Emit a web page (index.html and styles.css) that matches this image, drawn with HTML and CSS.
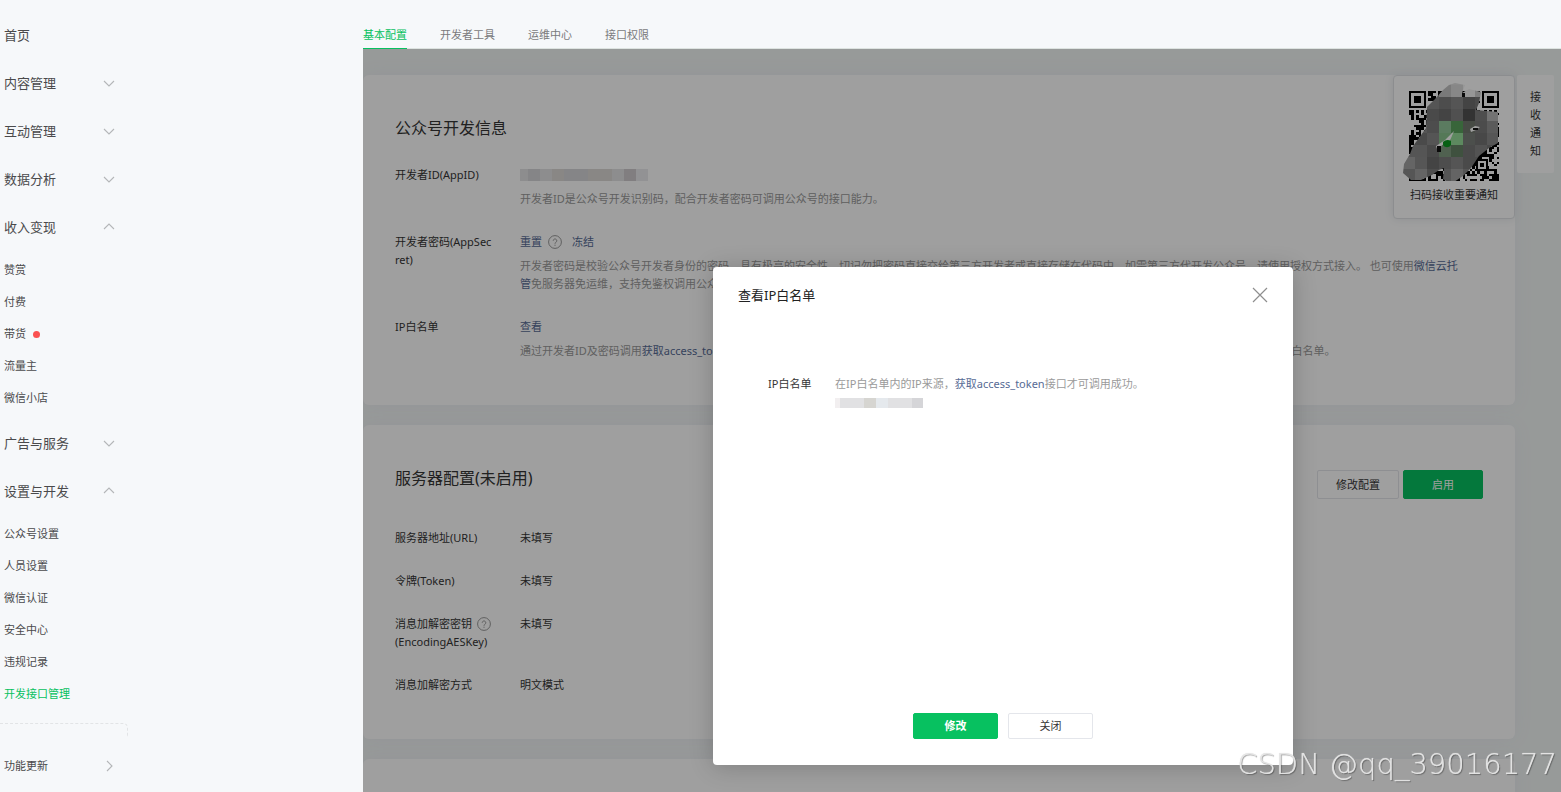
FILE: index.html
```html
<!DOCTYPE html>
<html lang="zh-CN">
<head>
<meta charset="utf-8">
<title>基本配置</title>
<link rel="stylesheet" href="styles.css">
</head>
<body>
<svg class="defs" aria-hidden="true">
  <symbol id="chevron" viewBox="0 0 12 8"><path d="M1 2 6 7 11 2" fill="none" stroke="currentColor" stroke-width="1.1"/></symbol>
  <symbol id="help" viewBox="0 0 14 14"><circle cx="7" cy="7" r="6.4" fill="none" stroke="currentColor"/><path d="M5.2 5.7a1.8 1.8 0 1 1 2.7 1.6c-.6.4-.9.7-.9 1.4M7 9.7v1.1" fill="none" stroke="currentColor"/></symbol>
</svg>
<div class="layout">
  <nav class="sidebar">
    <a class="menu" href="#">首页</a>
    <button class="menu">内容管理<svg class="chev"><use href="#chevron"/></svg></button>
    <button class="menu">互动管理<svg class="chev"><use href="#chevron"/></svg></button>
    <button class="menu">数据分析<svg class="chev"><use href="#chevron"/></svg></button>
    <button class="menu">收入变现<svg class="chev up"><use href="#chevron"/></svg></button>
    <div class="submenu">
      <a href="#">赞赏</a>
      <a href="#">付费</a>
      <a href="#">带货<span class="dot"></span></a>
      <a href="#">流量主</a>
      <a href="#">微信小店</a>
    </div>
    <button class="menu">广告与服务<svg class="chev"><use href="#chevron"/></svg></button>
    <button class="menu">设置与开发<svg class="chev up"><use href="#chevron"/></svg></button>
    <div class="submenu">
      <a href="#">公众号设置</a>
      <a href="#">人员设置</a>
      <a href="#">微信认证</a>
      <a href="#">安全中心</a>
      <a href="#">违规记录</a>
      <a class="current" href="#">开发接口管理</a>
    </div>
    <div class="divider"></div>
    <a class="menu updates" href="#">功能更新<svg class="chev right"><use href="#chevron"/></svg></a>
  </nav>

  <main class="main">
    <nav class="tabs">
      <a class="active" href="#">基本配置</a>
      <a href="#">开发者工具</a>
      <a href="#">运维中心</a>
      <a href="#">接口权限</a>
    </nav>
    <div class="stage">
      <section class="card">
        <header class="card-head"><h2>公众号开发信息</h2></header>
        <dl class="rows">
          <dt>开发者ID(AppID)</dt>
          <dd>
            <div class="line"><svg class="mask-id" viewBox="0 0 128 12" shape-rendering="crispEdges"><path fill="#e2e2e4" d="M0 0h128v12H0z"/><path fill="#d6d6d8" d="M8 0h12v12H8zM44 0h12v12H44zM56 0h12v12H56z"/><path fill="#dcd9d5" d="M32 0h12v12H32zM68 0h24v12H68z"/><path fill="#cfcace" d="M104 0h12v12h-12z"/><path fill="#eaeaee" d="M116 0h12v12h-12z"/></svg></div>
            <p>开发者ID是公众号开发识别码，配合开发者密码可调用公众号的接口能力。</p>
          </dd>
          <dt>开发者密码(AppSecret)</dt>
          <dd>
            <div class="line"><a href="#">重置</a><svg class="help"><use href="#help"/></svg><a class="freeze" href="#">冻结</a></div>
            <p>开发者密码是校验公众号开发者身份的密码，具有极高的安全性。切记勿把密码直接交给第三方开发者或直接存储在代码中。如需第三方代开发公众号，请使用授权方式接入。 也可使用<a href="#">微信云托管</a>免服务器免运维，支持免鉴权调用公众号服务端接口。</p>
          </dd>
          <dt>IP白名单</dt>
          <dd>
            <div class="line"><a href="#">查看</a></div>
            <p>通过开发者ID及密码调用<a href="#">获取access_token</a>接口时，需要设置访问来源IP为白名单。为保障账号安全，建议仅添加可信服务器的出口地址，并定期核对已有的IP白名单。</p>
          </dd>
        </dl>
      </section>

      <section class="card">
        <header class="card-head">
          <h2>服务器配置(未启用)</h2>
          <div class="actions"><button class="btn">修改配置</button><button class="btn primary">启用</button></div>
        </header>
        <dl class="rows">
          <dt>服务器地址(URL)</dt><dd>未填写</dd>
          <dt>令牌(Token)</dt><dd>未填写</dd>
          <dt><span class="line">消息加解密密钥<svg class="help"><use href="#help"/></svg></span>(EncodingAESKey)</dt><dd>未填写</dd>
          <dt>消息加解密方式</dt><dd>明文模式</dd>
        </dl>
      </section>

      <section class="card"></section>

      <aside class="notice">
        <div class="qr-card">
          <svg class="qr" viewBox="0 0 110 110">
            <defs><clipPath id="blob"><path d="M28 31 36 23 44 14 50 9 56 7 66 9 63 17 70 13 82 16 80 27 77 34 99 36V67L90 72 80 80 72 92 64 100 52 108 44 103 45 92 40 94 33 99 22 104 12 104 4 97 5 88 11 78 14 70 20 62 27 52z"/></clipPath></defs>
            <g id="modules" shape-rendering="crispEdges"></g>
            <g id="mosaic" clip-path="url(#blob)" shape-rendering="crispEdges"></g>
            <path fill="#fff" d="M55 55 50 67 43 69 39 76 37 70 46 64zM71 53 76 50 81 51 77 54 72 56z"/>
            <path fill="#111" d="M38 70h4v6h-4zM74 52h5v2h-5zM63 17h3v4h-3z"/>
            <path fill="#0c9a20" d="M44 66c2-2 5-3 8-1v4c-2 3-6 3-8 0z"/>
          </svg>
          <span>扫码接收重要通知</span>
        </div>
        <div class="notice-tab">接收通知</div>
      </aside>

      <div class="overlay"></div>

      <div class="modal" role="dialog" aria-labelledby="dlg-title">
        <header class="modal-head">
          <h3 id="dlg-title">查看IP白名单</h3>
          <button class="close" aria-label="关闭"><svg viewBox="0 0 16 16"><path d="M1 1 15 15M15 1 1 15" stroke="currentColor" stroke-width="1.2"/></svg></button>
        </header>
        <div class="modal-body">
          <div class="modal-label">IP白名单</div>
          <div>
            <p>在IP白名单内的IP来源，<a href="#">获取access_token</a>接口才可调用成功。</p>
            <svg class="mask-ip" viewBox="0 0 88 10" shape-rendering="crispEdges"><path fill="#e1e1e3" d="M0 0h88v10H0z"/><path fill="#f2eff0" d="M0 0h5v10H0z"/><path fill="#d6d5d1" d="M29 0h12v10H29z"/><path fill="#e5e9ed" d="M41 0h12v10H41z"/><path fill="#d5d5d8" d="M77 0h11v10H77z"/></svg>
          </div>
        </div>
        <footer class="modal-foot"><button class="btn primary strong">修改</button><button class="btn">关闭</button></footer>
      </div>
    </div>
  </main>
</div>
<div class="watermark">CSDN @qq_39016177</div>
<script src="script.js"></script>
</body>
</html>
```
FILE: styles.css
```css
* { box-sizing: border-box; }
body {
  margin: 0;
  background: #f6f8fa;
  color: #353535;
  font: 11px/18px "Noto Sans", "Noto Sans CJK SC", sans-serif;
}
h2, h3, p, dl, dd { margin: 0; font-weight: 400; }
a { color: #576b95; text-decoration: none; }
button { font: inherit; color: inherit; padding: 0; border: 0; background: none; cursor: pointer; }
.defs { position: absolute; width: 0; height: 0; }

.layout { display: flex; height: 100vh; overflow: hidden; }

.sidebar { flex: 0 0 363px; padding-top: 11px; color: #4a4a4c; }
.menu {
  display: flex;
  align-items: center;
  justify-content: space-between;
  width: 119px;
  height: 48px;
  padding: 0 4px;
  font-size: 13px;
  color: #4a4a4c;
}
.chev { width: 12px; height: 8px; color: #b4b6b8; }
.up { transform: rotate(180deg); }
.right { transform: rotate(-90deg); }
.submenu { padding: 3px 0 5px; }
.submenu a { display: flex; align-items: center; height: 32px; padding-left: 4px; color: #4a4a4c; }
.submenu .current { color: #07c160; }
.dot { width: 7px; height: 7px; margin-left: 7px; border-radius: 50%; background: #fa5151; }
.divider { width: 128px; height: 14px; margin-top: 8px; border: dashed #e2e4e6; border-width: 1px 1px 0 0; border-radius: 0 5px 0 0; }
.updates { margin-top: 5px; font-size: 11px; }

.main { flex: 1; min-width: 0; display: flex; flex-direction: column; }
.tabs { display: flex; gap: 33px; padding-top: 22px; border-bottom: 1px solid #dde3e0; }
.tabs a { line-height: 26px; margin-bottom: -1px; border-bottom: 1px solid transparent; color: #7a7a7c; }
.tabs .active { color: #07c160; border-color: #07c160; }

.stage { position: relative; flex: 1; overflow: hidden; padding: 26px 46px 0 0; background: #f3f7f5; }
.card { min-height: 300px; margin-bottom: 20px; padding: 41px 32px 45px; border-radius: 6px; background: #fff; box-shadow: 0 0 20px #ebeef4; }
.card-head { display: flex; justify-content: space-between; margin-bottom: 26px; }
.card-head:has(.actions) { margin-bottom: 30px; }
h2 { font-size: 16px; line-height: 24px; }
.actions { display: flex; gap: 4px; margin-top: 4px; }
.btn { width: 85px; height: 26px; border: 1px solid #e4e6eb; border-radius: 2px; }
.primary { border-color: #07c160; background: #07c160; color: #fff; }
.strong { font-weight: 700; }
.actions .btn { width: 82px; height: 29px; }
.actions .primary { width: 80px; }

.rows { display: grid; grid-template-columns: 100px 1fr; gap: 25px; }
dt { word-break: break-all; }
dd p { max-width: 948px; margin-top: 6px; color: #9a9a9a; }
.line { display: flex; align-items: center; height: 18px; }
.help { width: 14px; height: 14px; margin-left: 6px; color: #999; }
dt .help { margin-left: 5px; }
.freeze { margin-left: 10px; }
.mask-id { width: 128px; height: 12px; }

.notice { position: absolute; top: 26px; right: 7px; display: flex; align-items: flex-start; gap: 2px; }
.qr-card { display: flex; flex-direction: column; align-items: center; width: 122px; height: 144px; border: 1px solid #e0e3e6; border-radius: 4px; background: #fff; box-shadow: 0 0 10px #e4e7ea; }
.qr { width: 110px; height: 110px; }
.notice-tab { width: 37px; height: 98px; padding: 13px; border-radius: 2px; background: #fff; word-break: break-all; }

.overlay { position: absolute; inset: 0; background: rgba(0, 0, 0, 0.376); }

.modal {
  position: absolute;
  top: 218px;
  left: 350px;
  display: flex;
  flex-direction: column;
  width: 580px;
  height: 498px;
  border-radius: 4px;
  background: #fff;
  box-shadow: 0 2px 24px rgba(0, 0, 0, 0.2);
}
.modal-head { display: flex; align-items: center; justify-content: space-between; padding: 16px 25px; }
h3 { font-size: 13px; line-height: 24px; color: #222; }
.close { display: flex; color: #8e8e8e; }
.close svg { width: 16px; height: 16px; }
.modal-body { flex: 1; display: flex; gap: 22px; padding: 52px 55px 0; }
.modal-body p { color: #9a9a9a; }
.modal-label { width: 45px; white-space: nowrap; }
.mask-ip { display: block; width: 88px; height: 10px; margin-top: 5px; }
.modal-foot { display: flex; justify-content: center; gap: 10px; padding-bottom: 26px; }

.watermark {
  position: fixed;
  right: 4px;
  bottom: 10px;
  font: 200 29px/36px "DejaVu Sans", sans-serif;
  color: rgba(228, 228, 228, 0.9);
  text-shadow: 0 0 1px rgba(228, 228, 228, 0.9), 1px 1px 1px rgba(0, 0, 0, 0.4);
}
```
FILE: script.js
```
const NS = "http://www.w3.org/2000/svg";

function rect(parent, x, y, w, h, fill) {
  const r = document.createElementNS(NS, "rect");
  for (const [k, v] of Object.entries({ x, y, width: w, height: h, fill })) r.setAttribute(k, v);
  parent.append(r);
}

// QR modules: 37 x 37 cells
const modules = document.getElementById("modules");
const cell = 90 / 37;
let seed = 77;
for (let r = 0; r < 37; r++) {
  for (let c = 0; c < 37; c++) {
    seed = (seed * 1103515245 + 12345) % 2147483648;
    const finder = (r < 8 && (c < 8 || c > 28)) || (r > 28 && c < 8);
    if (!finder && seed / 2147483648 > 0.48) rect(modules, 10 + c * cell, 15 + r * cell, cell, cell, "#000");
  }
}
for (const [x, y] of [[10, 15], [83, 15], [10, 88]]) {
  rect(modules, x, y, 17, 17, "#000");
  rect(modules, x + 2, y + 2, 13, 13, "#fff");
  rect(modules, x + 5, y + 5, 7, 7, "#000");
}
rect(modules, 77, 83, 12, 12, "#000");
rect(modules, 79, 85, 8, 8, "#fff");
rect(modules, 81, 87, 4, 4, "#000");

// Mosaic tiles
const tiles = [
  "eee eee eee ccc ddd eee eee eee",
  "888 888 888 c3c3c3 d8d8d8 f2f2f2 ccc aaa",
  "888 888 888 7c7c7c 888888 6e6e6e 777 777",
  "888 888 777777 6e6e6e 808080 525252 7d7d7d b8b8b8",
  "888 888 7c7c7c 93c69a 5aa35e 73796f 7a7a7a 939393",
  "888 777777 888888 88c38d 95dc98 7b7f7b 747474 8a8a8a",
  "888 888888 777777 809c80 658365 777777 858585 777777",
  "a3a3a3 8a8a8a 6e6e6e 7c7c7c 888888 777777 777 777",
  "8a8a8a a0a0a0 7c7c7c 888888 a0a0a0 888888 777 777"
];
const mosaic = document.getElementById("mosaic");
tiles.forEach((row, r) => row.split(" ").forEach((color, c) =>
  rect(mosaic, 4 + c * 12, r * 12 - 3, 12, 12, "#" + color)));
```
